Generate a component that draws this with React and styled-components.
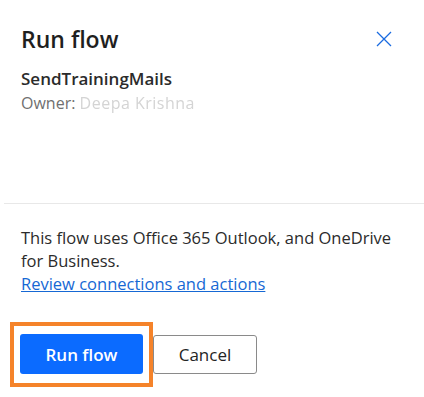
import React from 'react'
import styled, { createGlobalStyle } from 'styled-components'

const GlobalStyle = createGlobalStyle`
  html, body {
    margin: 0;
    padding: 0;
    background: #ffffff;
  }
  body {
    font-family: "Open Sans", "Noto Sans", sans-serif;
    color: #242424;
  }
`

function App() {
  return (
    <>
      <GlobalStyle />
      <Panel>
        <Header>
          <Title>Run flow</Title>
          <CloseButton aria-label="Close">
            <svg width="16" height="16" viewBox="0 0 16 16">
              <path d="M1 1 L15 15 M15 1 L1 15" stroke="#1a6be0" strokeWidth="1.3" fill="none" />
            </svg>
          </CloseButton>
        </Header>
        <FlowName>SendTrainingMails</FlowName>
        <Owner>
          Owner: <Hidden>Deepa Krishna</Hidden>
        </Owner>
        <Divider />
        <Body>
          <Text>This flow uses Office 365 Outlook, and OneDrive for Business.</Text>
          <Link href="#">Review connections and actions</Link>
        </Body>
        <Footer>
          <Highlight>
            <PrimaryButton>Run flow</PrimaryButton>
          </Highlight>
          <SecondaryButton>Cancel</SecondaryButton>
        </Footer>
      </Panel>
    </>
  )
}

export default App

const Panel = styled.div`
  width: 424px;
  height: 397px;
  display: flex;
  flex-direction: column;
  box-sizing: border-box;
`
const Header = styled.div`
  display: flex;
  align-items: center;
  justify-content: space-between;
  padding: 23px 32px 0 21px;
`
const Title = styled.h2`
  margin: 0;
  font-size: 23px;
  line-height: 32px;
  font-weight: 600;
  color: #1f1f1f;
`
const CloseButton = styled.button`
  border: none;
  background: none;
  padding: 0;
  width: 16px;
  height: 16px;
  display: flex;
  cursor: pointer;
`
const FlowName = styled.div`
  margin: 12px 0 0 21px;
  font-size: 17px;
  line-height: 24px;
  font-weight: 600;
  color: #2b2b2b;
`
const Owner = styled.div`
  margin: 1px 0 0 21px;
  font-size: 16px;
  line-height: 22px;
  color: #707070;
`
const Hidden = styled.span`
  color: #d4d4d4;
  filter: blur(0.7px);
  letter-spacing: 0.5px;
`
const Divider = styled.hr`
  margin: 89px 0 0 4px;
  border: none;
  border-top: 1px solid #e8e8e8;
  height: 0;
`
const Body = styled.div`
  padding: 22px 21px 0 21px;
  display: flex;
  flex-direction: column;
`
const Text = styled.p`
  margin: 0;
  font-size: 16.5px;
  line-height: 23px;
  color: #2b2b2b;
`
const Link = styled.a`
  font-size: 16.5px;
  line-height: 23px;
  color: #1668d4;
  text-decoration: underline;
`
const Footer = styled.div`
  display: flex;
  align-items: center;
  gap: 10px;
  padding: 39px 0 0 20px;
`
const Highlight = styled.div`
  position: relative;
  display: flex;

  &::after {
    content: "";
    position: absolute;
    left: -10px;
    top: -12px;
    right: -10px;
    bottom: -13px;
    border: 4px solid #f5832a;
    pointer-events: none;
  }
`
const PrimaryButton = styled.button`
  width: 123px;
  height: 40px;
  border: none;
  border-radius: 3px;
  background: #0b6bff;
  color: #ffffff;
  font-family: inherit;
  font-size: 17px;
  font-weight: 600;
  cursor: pointer;
`
const SecondaryButton = styled.button`
  width: 104px;
  height: 39px;
  border: 1px solid #8a8a8a;
  border-radius: 3px;
  background: #ffffff;
  color: #242424;
  font-family: inherit;
  font-size: 17px;
  font-weight: 400;
  cursor: pointer;
`
